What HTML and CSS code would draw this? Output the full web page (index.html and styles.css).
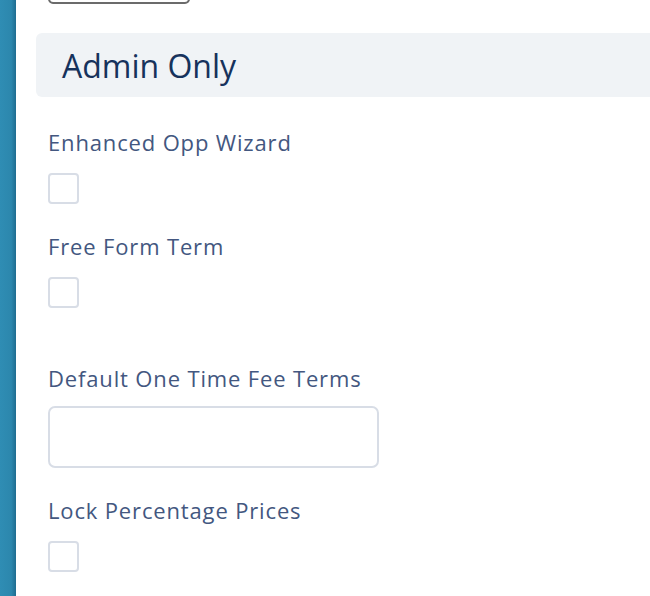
FILE: index.html
```html
<!DOCTYPE html>
<html>
<head>
<meta charset="utf-8">
<link rel="stylesheet" href="styles.css">
</head>
<body>
<div class="page">
  <div class="rail"></div>
  <main class="main">
    <div class="top-btn"></div>
    <div class="section-head"><h2>Admin Only</h2></div>
    <div class="fields">
      <div class="field">
        <label class="lbl">Enhanced Opp Wizard</label>
        <span class="cb"></span>
      </div>
      <div class="field">
        <label class="lbl">Free Form Term</label>
        <span class="cb"></span>
      </div>
      <div class="field field-gap">
        <label class="lbl lbl-input">Default One Time Fee Terms</label>
        <span class="input"></span>
      </div>
      <div class="field">
        <label class="lbl">Lock Percentage Prices</label>
        <span class="cb"></span>
      </div>
    </div>
  </main>
</div>
</body>
</html>
```

FILE: styles.css
```css
html, body {
  margin: 0;
  padding: 0;
  background: #ffffff;
  overflow: hidden;
}
body {
  font-family: "Open Sans", "Lato", sans-serif;
}
.page {
  display: flex;
  height: 596px;
}
.rail {
  width: 16px;
  flex: 0 0 16px;
  background: linear-gradient(to right, #2f8db4 0%, #2c87ad 70%, #1f6c90 100%);
}
.main {
  flex: 1;
  overflow: hidden;
  padding-left: 20px;
}
.top-btn {
  margin-left: 12px;
  width: 138px;
  height: 30px;
  margin-top: -30px;
  border: 2px solid #6b6b6b;
  border-radius: 5px;
}
.section-head {
  margin-top: 29px;
  height: 64px;
  width: 640px;
  background: #f0f3f6;
  border-radius: 6px 0 0 6px;
  display: flex;
  align-items: center;
  padding-left: 26px;
}
.section-head h2 {
  margin: 0;
  font-weight: 400;
  font-size: 32px;
  color: #16325c;
}
.fields {
  padding-left: 12px;
  display: flex;
  flex-direction: column;
  padding-top: 31px;
}
.field {
  display: flex;
  flex-direction: column;
  align-items: flex-start;
  margin-bottom: 28px;
}
.field-gap {
  margin-top: 28px;
}
.lbl {
  font-size: 22px;
  letter-spacing: 0.85px;
  color: #435780;
  line-height: 28px;
  margin-bottom: 17px;
}
.lbl-input {
  margin-bottom: 14px;
}
.cb {
  display: block;
  width: 27px;
  height: 27px;
  border: 2px solid #d8dde6;
  border-radius: 4px;
}
.input {
  display: block;
  width: 327px;
  height: 58px;
  border: 2px solid #d8dde6;
  border-radius: 7px;
}
```
